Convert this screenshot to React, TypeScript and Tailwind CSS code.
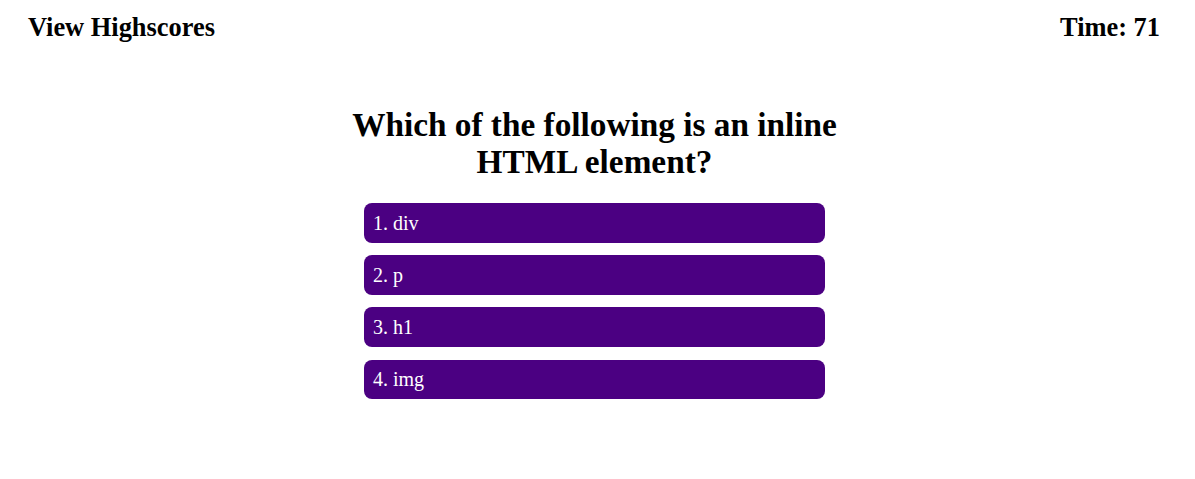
export default function App() {
  const answers = ["1. div", "2. p", "3. h1", "4. img"];
  return (
    <div className="min-h-screen bg-white text-black" style={{ fontFamily: '"Liberation Serif", "Times New Roman", serif' }}>
      <header className="flex items-center justify-between pl-[28px] pr-[35px] pt-[12px]">
        <span className="text-[26.4px] font-bold leading-[30px]">View Highscores</span>
        <span className="text-[26.4px] font-bold leading-[30px]">Time: 71</span>
      </header>
      <main className="flex justify-center pr-[6px] pt-[64px]">
        <div className="flex w-[540px] flex-col items-center">
          <h1 className="text-center text-[33.3px] font-bold leading-[37px]">
            Which of the following is an inline HTML element?
          </h1>
          <div className="mt-[23px] flex w-[461px] flex-col gap-[12.6px]">
            {answers.map((a) => (
              <button
                key={a}
                className="h-[39.6px] rounded-[8px] bg-[#4b0082] pl-[9px] text-left text-[20px] leading-[24px] text-white"
              >
                {a}
              </button>
            ))}
          </div>
        </div>
      </main>
    </div>
  );
}
